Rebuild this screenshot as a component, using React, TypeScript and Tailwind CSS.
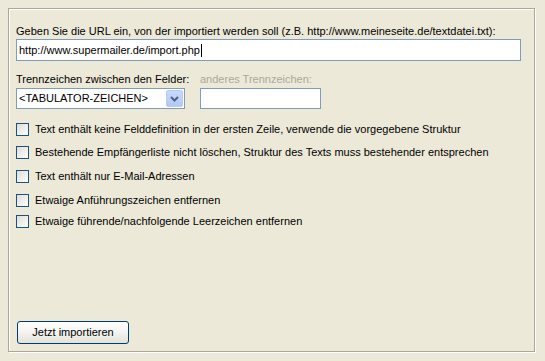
import React from "react";

const options = [
  "Text enthält keine Felddefinition in der ersten Zeile, verwende die vorgegebene Struktur",
  "Bestehende Empfängerliste nicht löschen, Struktur des Texts muss bestehender entsprechen",
  "Text enthält nur E-Mail-Adressen",
  "Etwaige Anführungszeichen entfernen",
  "Etwaige führende/nachfolgende Leerzeichen entfernen",
];

const rowGaps = ["mt-[14px]", "mt-[10px]", "mt-[11px]", "mt-[11px]", "mt-[8px]"];

function Checkbox() {
  return (
    <span className="block h-[13px] w-[13px] shrink-0 border border-[#1c5180] bg-gradient-to-br from-[#dcdcd7] to-white" />
  );
}

export default function App() {
  return (
    <div
      className="h-[361px] w-[545px] bg-[#ece9d8] p-2 text-[11px] leading-[13px] text-black"
      style={{ fontFamily: '"Liberation Sans", Arial, sans-serif' }}
    >
      <div className="flex h-[344px] w-[527px] flex-col border border-[#aca899] pl-[7px] pt-[16px] shadow-[inset_1px_1px_0_#fff,1px_1px_0_#fff]">
        <label className="block h-[13px]">
          Geben Sie die URL ein, von der importiert werden soll (z.B. http://www.meineseite.de/textdatei.txt):
        </label>
        <div className="mt-px flex h-[22px] w-[505px] items-center border border-[#7f9db9] bg-white pl-[2px]">
          http://www.supermailer.de/import.php
          <span className="ml-px inline-block h-[13px] w-px bg-black" />
        </div>

        <div className="mt-[12px] flex">
          <div className="w-[184px]">
            <div className="h-[13px]">Trennzeichen zwischen den Felder:</div>
            <div className="mt-[2px] flex h-[21px] w-[169px] items-center border border-[#7f9db9] bg-white pl-[2px]">
              <span className="flex-1">&lt;TABULATOR-ZEICHEN&gt;</span>
              <span className="mr-px flex h-[17px] w-[17px] items-center justify-center rounded-[2px] border border-[#b9cbf5] bg-gradient-to-b from-[#c8d9fc] to-[#b1c8f6]">
                <svg width="9" height="6" viewBox="0 0 9 6">
                  <path d="M1 1 L4.5 4.5 L8 1" fill="none" stroke="#4d6185" strokeWidth="2" />
                </svg>
              </span>
            </div>
          </div>
          <div>
            <div className="h-[13px] text-[#aca899]">anderes Trennzeichen:</div>
            <div className="mt-[2px] h-[21px] w-[121px] border border-[#7f9db9] bg-white" />
          </div>
        </div>

        {options.map((text, i) => (
          <div key={text} className={`${rowGaps[i]} flex items-center gap-[6px]`}>
            <Checkbox />
            <span>{text}</span>
          </div>
        ))}

        <div className="mt-auto mb-[7px] ml-px">
          <button className="flex h-[23px] w-[112px] items-center justify-center rounded-[3px] border border-[#003c74] bg-gradient-to-b from-white via-[#f3f3ef] to-[#e3e2da] text-black">
            Jetzt importieren
          </button>
        </div>
      </div>
    </div>
  );
}
